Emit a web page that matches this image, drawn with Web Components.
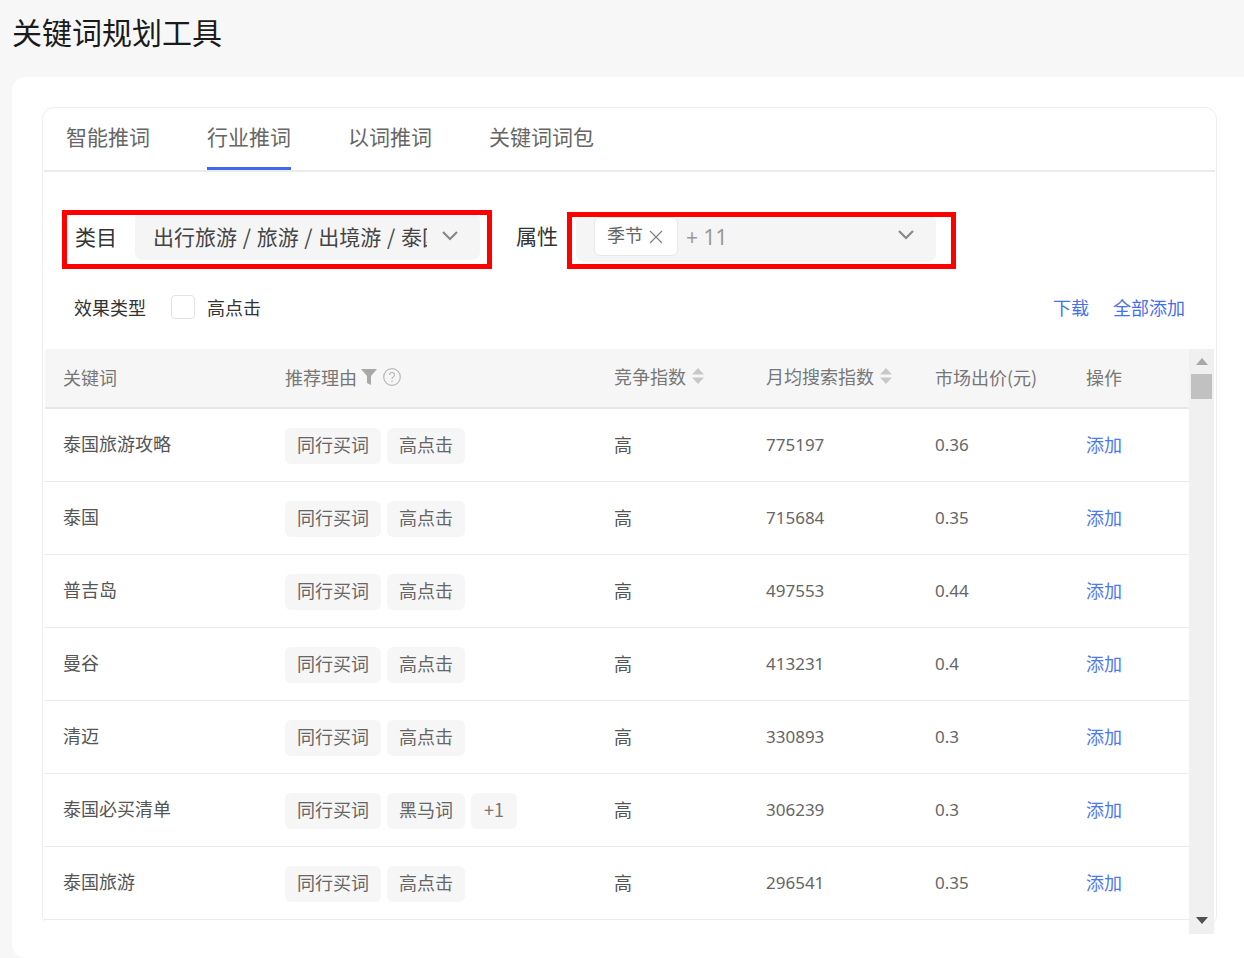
<!DOCTYPE html>
<html lang="zh"><head><meta charset="utf-8"><title>关键词规划工具</title>
<style>
html,body{margin:0;height:958px;overflow:hidden;background:#f7f7f7;font-family:"Noto Sans CJK SC","Noto Sans",sans-serif;color:#333}
</style></head><body>
<kw-page></kw-page>
<script>
const CH=`<svg width="18" height="12" viewBox="0 0 18 12" fill="none" stroke="#888" stroke-width="2.200"><path d="M2 2l7 7 7-7"/></svg>`;
class KwPage extends HTMLElement{connectedCallback(){const s=this.attachShadow({mode:'open'});s.innerHTML=`<style>
:host{display:block}
h1{margin:0;font-size:30px;font-weight:400;color:#1a1a1a;line-height:40px;padding:11px 12px 26px}
.card{margin-left:12px;background:#fff;border-radius:14px 0 0 14px;height:881px;padding:30px 27px 0 30px;box-sizing:border-box}
.box{height:821px;border:1px solid #eee;border-radius:12px;box-sizing:border-box;padding:0 1px;background:#fff}
</style><h1>关键词规划工具</h1><div class="card"><div class="box"><kw-tabs></kw-tabs><kw-filters></kw-filters><kw-table></kw-table></div></div>`}}
class KwTabs extends HTMLElement{connectedCallback(){const s=this.attachShadow({mode:'open'});s.innerHTML=`<style>
:host{display:flex;gap:57px;height:62px;border-bottom:2px solid #ebebeb;padding-left:22px}
a{font-size:21px;line-height:57px;color:#666;height:62px;box-sizing:border-box}
a.on{border-bottom:3px solid #4169ee}
</style><a>智能推词</a><a class="on">行业推词</a><a>以词推词</a><a>关键词词包</a>`}}
class KwFilters extends HTMLElement{connectedCallback(){const s=this.attachShadow({mode:'open'});s.innerHTML=`<style>
:host{display:block;height:177px;box-sizing:border-box;padding-top:38px}
.r1{display:flex;align-items:flex-start}
.hl{border:5px solid #f00;box-sizing:border-box;display:flex}
.h1{width:430px;height:59px;margin-left:18px}
.h2{width:389px;margin:2px 0 0 0;height:57px}
.lab{font-size:21px;color:#333}
.h1 .lab{line-height:42px;padding:0 0 0 8px;width:68px;box-sizing:border-box;white-space:nowrap}
.at{line-height:50px;margin-left:24px;width:51px;white-space:nowrap}
.sel{background:#f5f5f5;border-radius:4px 4px 8px 8px;display:flex;box-sizing:border-box;font-size:21px;color:#444;height:45px}
.s1{width:345px;padding-left:18px;align-items:center}
.s1 span{width:274px;overflow:hidden;white-space:nowrap;word-spacing:1px;margin-top:-4px;flex:none}
.s1 svg{margin-left:14px;align-self:flex-start;margin-top:15px}
.s2{width:360px;margin-left:4px;padding-left:18px;align-items:flex-start}
.tag{background:#fff;border:1px solid #e8e8e8;border-radius:6px;height:39px;display:flex;align-items:center;box-sizing:border-box;width:84px;padding:0 0 5px 12px;font-size:18px;color:#666;gap:6px;flex:none}
.tag svg{display:block;margin-top:5px}
.more{font:21px/40px "Noto Sans",sans-serif;color:#999;margin-left:8px;width:211px;flex:none}
.s2>svg{margin-top:12px}
.r2{display:flex;align-items:center;height:36px;margin-top:20px;padding:0 30px;font-size:18px}
.cb{width:24px;height:24px;border:1px solid #e3e3e3;border-radius:4px;box-sizing:border-box;margin:0 12px 0 25px;background:#fff}
.sp{flex:1}
a{color:#4470f0;margin-left:24px}
</style>
<div class="r1"><div class="hl h1"><span class="lab">类目</span><div class="sel s1"><span>出行旅游 / 旅游 / 出境游 / 泰国</span>${CH}</div></div>
<span class="lab at">属性</span>
<div class="hl h2"><div class="sel s2"><div class="tag">季节<svg width="14" height="14" viewBox="0 0 14 14" stroke="#808080" stroke-width="1.200"><path d="M1 1l12 12M13 1L1 13"/></svg></div><span class="more">+ 11</span>${CH}</div></div></div>
<div class="r2"><span>效果类型</span><span class="cb"></span><span>高点击</span><span class="sp"></span><a>下载</a><a>全部添加</a></div>`}}
const SORT=`<svg class="so" width="12" height="16" viewBox="0 0 12 16" fill="#c8c8c8"><path d="M6 0l6 6.500H0zM6 16L0 9.500h12z"/></svg>`;
const ROWS=[["泰国旅游攻略",["同行买词","高点击"],"775197","0.36"],["泰国",["同行买词","高点击"],"715684","0.35"],["普吉岛",["同行买词","高点击"],"497553","0.44"],["曼谷",["同行买词","高点击"],"413231","0.4"],["清迈",["同行买词","高点击"],"330893","0.3"],["泰国必买清单",["同行买词","黑马词","+1"],"306239","0.3"],["泰国旅游",["同行买词","高点击"],"296541","0.35"]];
class KwTable extends HTMLElement{connectedCallback(){const s=this.attachShadow({mode:'open'});
const cols='grid-template-columns:222px 329px 152px 169px 151px 1fr';
s.innerHTML=`<style>
:host{display:flex;height:585px;font-size:18px;margin-right:1px}
.main{flex:1;min-width:0;display:flex;flex-direction:column;overflow:hidden}
.row{display:grid;${cols};height:73px;flex:none;border-bottom:1px solid #ebebeb;box-sizing:border-box;align-items:center;padding-left:19px;color:#555}
.head{height:60px;background:#f6f6f6;border-bottom:2px solid #e8e8e8;color:#777;margin-left:1px;padding-left:18px}
.head span{display:flex;align-items:center;gap:6px;margin-top:-2px}
.head span.sc{margin-top:-4px}
.k{margin-top:-4px}
.rest{flex:1;background:#fff}
.tags{display:flex;gap:6px}
.t{background:#f6f6f6;border-radius:6px;height:36px;line-height:32px;padding:0 12px;color:#666;margin-top:1px}
.t.p{min-width:46px;padding:0;text-align:center;box-sizing:border-box;color:#777}
.g{margin-top:-3px;color:#555}
.n{font-family:"Noto Sans",sans-serif;font-size:17px;color:#666;margin-top:-2px}
a{color:#4c78f2;margin-top:-3px}
.sb{width:25px;background:#f0f0f0;flex:none;display:flex;flex-direction:column;align-items:center}
.sb .th{width:21px;height:25px;background:#c1c1c1;margin-top:9px}
.sb svg{display:block}
.up{margin-top:9px}
.dn{margin-top:auto;margin-bottom:10px}
</style>
<div class="main"><div class="row head"><span>关键词</span><span>推荐理由<svg width="16" height="16" viewBox="0 0 16 16" fill="#a8a8a8" style="margin-left:-2px"><path d="M0 0h16l-6 7v9l-4-2V7z"/></svg><svg width="18" height="18" viewBox="0 0 18 18" fill="none" stroke="#b8b8b8" stroke-width="1.200"><circle cx="9" cy="9" r="8.300"/><path d="M6.500 7c0-1.500 1.100-2.500 2.500-2.500S11.500 5.500 11.500 7c0 1.800-2.500 2-2.500 4"/><path d="M9 12.500v1.500"/></svg></span><span class="sc">竞争指数${SORT}</span><span class="sc">月均搜索指数${SORT}</span><span>市场出价(元)</span><span>操作</span></div>
${ROWS.map(r=>`<div class="row"><span class="k">${r[0]}</span><span class="tags">${r[1].map(t=>`<span class="t${t==='+1'?' p':''}">${t}</span>`).join('')}</span><span class="g">高</span><span class="n">${r[2]}</span><span class="n">${r[3]}</span><a>添加</a></div>`).join('')}<div class="rest"></div></div>
<div class="sb"><svg class="up" width="12" height="7" viewBox="0 0 12 7" fill="#a8a8a8"><path d="M6 0l6 7H0z"/></svg><div class="th"></div><svg class="dn" width="12" height="7" viewBox="0 0 12 7" fill="#505050"><path d="M0 0h12L6 7z"/></svg></div>`}}
customElements.define('kw-page',KwPage);customElements.define('kw-tabs',KwTabs);customElements.define('kw-filters',KwFilters);customElements.define('kw-table',KwTable);
</script></body></html>
